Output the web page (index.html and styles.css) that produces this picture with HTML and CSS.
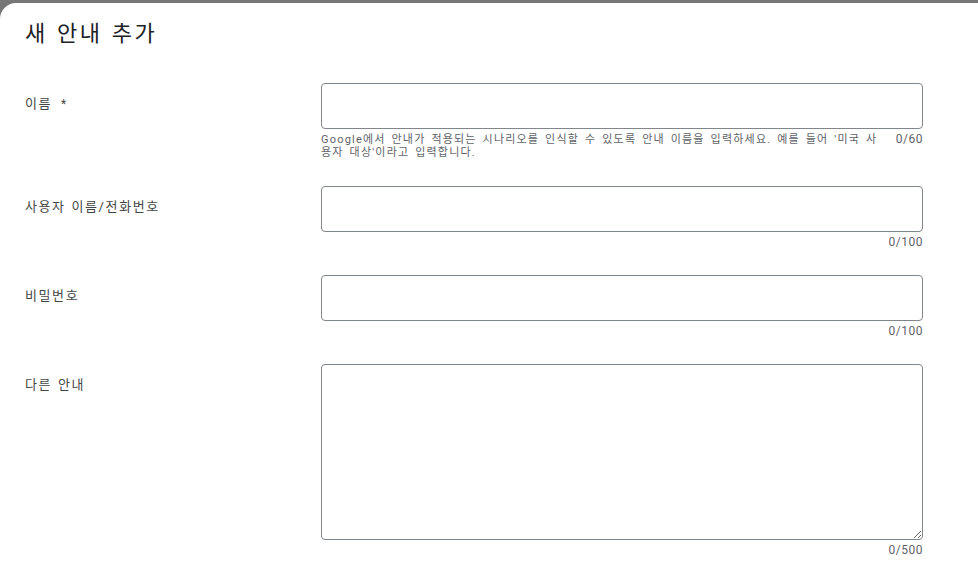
FILE: index.html
```html
<!DOCTYPE html>
<html lang="ko">
<head>
    <meta charset="UTF-8" />
    <meta name="viewport" content="width=device-width, initial-scale=1" />
    <title>새 안내 추가</title>
    <link rel="stylesheet" href="styles.css">
</head>
<body>
    <div class="panel">
        <h1>새 안내 추가</h1>

        <div class="row">
            <label class="label" for="name">이름 <span class="req">*</span></label>
            <div class="field">
                <input type="text" id="name" maxlength="60" />
                <div class="helper">
                    <span class="hint">Google에서 안내가 적용되는 시나리오를 인식할 수 있도록 안내 이름을 입력하세요. 예를 들어 '미국 사용자 대상'이라고 입력합니다.</span>
                    <span class="count">0/60</span>
                </div>
            </div>
        </div>

        <div class="row">
            <label class="label" for="user">사용자 이름/전화번호</label>
            <div class="field">
                <input type="text" id="user" maxlength="100" />
                <div class="helper">
                    <span class="count">0/100</span>
                </div>
            </div>
        </div>

        <div class="row">
            <label class="label" for="pass">비밀번호</label>
            <div class="field">
                <input type="text" id="pass" maxlength="100" />
                <div class="helper">
                    <span class="count">0/100</span>
                </div>
            </div>
        </div>

        <div class="row">
            <label class="label" for="other">다른 안내</label>
            <div class="field">
                <textarea id="other" maxlength="500"></textarea>
                <div class="helper">
                    <span class="count">0/500</span>
                </div>
            </div>
        </div>
    </div>
</body>
</html>
```

FILE: styles.css
```css
html, body {
    height: 100%;
}

body {
    margin: 0;
    background: #777777;
    font-family: Roboto, "Noto Sans CJK KR", sans-serif;
    color: #3c4043;
    overflow: hidden;
}

.panel {
    margin-top: 3px;
    min-height: 100%;
    background: #ffffff;
    border-top-left-radius: 16px;
    padding: 17px 55px 0 25px;
    box-sizing: border-box;
}

h1 {
    margin: 0 0 35px;
    font-size: 22px;
    line-height: 28px;
    font-weight: 400;
    letter-spacing: 2.6px;
    word-spacing: 1px;
    color: #202124;
}

.row {
    display: grid;
    grid-template-columns: 296px 1fr;
    margin-bottom: 27px;
}

.label {
    margin-top: 13px;
    font-size: 13px;
    line-height: 16px;
    letter-spacing: 1.6px;
    word-spacing: 1px;
    color: #444746;
}

.req {
    margin-left: 3px;
    font-size: 12px;
}

.field {
    display: flex;
    flex-direction: column;
}

input[type="text"],
textarea {
    box-sizing: border-box;
    width: 100%;
    height: 46px;
    border: 1px solid #80868b;
    border-radius: 4px;
    padding: 0 12px;
    font-family: inherit;
    font-size: 14px;
    color: #202124;
    background: #ffffff;
}

textarea {
    height: 176px;
    padding: 10px 12px;
    resize: vertical;
}

input[type="text"]:focus,
textarea:focus {
    outline: none;
    border-color: #1a73e8;
}

.helper {
    display: flex;
    justify-content: flex-end;
    gap: 14px;
    margin-top: 4px;
    color: #5f6368;
}

.hint {
    flex: 1;
    font-size: 11px;
    line-height: 13px;
    letter-spacing: 1.2px;
    word-spacing: 2px;
}

.count {
    font-size: 12px;
    line-height: 12px;
    letter-spacing: 0.5px;
    white-space: nowrap;
}
```
